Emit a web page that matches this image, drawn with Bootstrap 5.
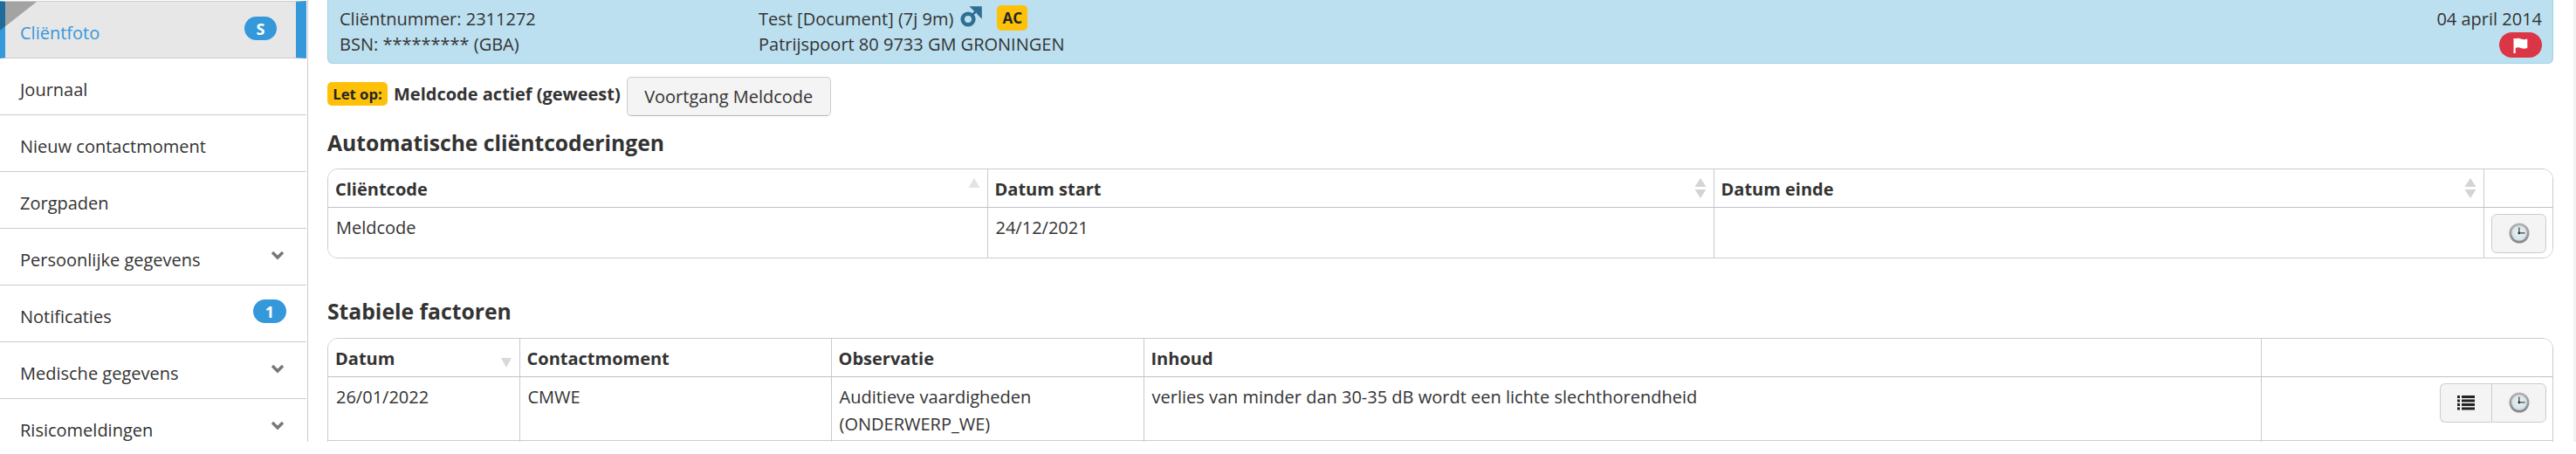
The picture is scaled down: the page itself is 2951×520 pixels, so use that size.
<!DOCTYPE html>
<html lang="nl">
<head>
<meta charset="utf-8">
<title>Cliëntfoto</title>
<link rel="stylesheet" href="https://cdn.jsdelivr.net/npm/bootstrap@5.3.0/dist/css/bootstrap.min.css">
<style>
html,body{height:520px;overflow:hidden;background:#fff}
body{font-family:"Open Sans","Noto Sans",sans-serif;font-size:20px;color:#333}
.shell{height:506px;overflow:hidden}
.side{width:353px;flex:none;border-right:1px solid #ccc;padding-top:1px}
.side-item{flex:none;height:65px;border-bottom:1px solid #ccc;padding:0 23px;color:#333;font-size:20px;background:#fff;position:relative;text-decoration:none;margin-right:1px}
.side-item .lbl{padding-top:8px}
.side-item.on{height:66px;border-top:1px solid #ccc;background:#e7e7e7;color:#3498db;border-left:6px solid #3498db;border-right:12px solid #3498db;padding-left:17px;padding-right:22px}
.fold{position:absolute;left:-6px;top:-2px}
.pill{background:#3498db;color:#fff;font-size:18px;font-weight:700;border-radius:14px;height:27px;display:flex;align-items:center;justify-content:center;line-height:1;position:absolute}
.pill-s{width:37px;right:22px;top:17px}
.pill-1{width:38px;right:23px;top:16px}
.chev{position:absolute;right:25px;top:25px}
.main{flex:1;min-width:0;padding:0 23px 0 22px}
.strip{width:3px;flex:none;background:#f1f1f1}
.banner{height:73px;background:#bce0f0;border:1px solid #9bd3e6;border-top:0;border-radius:0 0 6px 6px;padding:7px 12px 0 13px;line-height:29px;font-size:20px}
.bcol{width:480px}
.mars{margin:-6px 0 0 8px}
.ac{background:#ffc107;color:#212529;font-weight:700;border-radius:5px;font-size:17px;width:35px;height:29px;line-height:29px;text-align:center;margin:-2px 0 0 17px}
.flagpill{background:#dc3545;width:49px;height:29px;border-radius:15px;display:flex;align-items:center;justify-content:center;margin-top:1px}
.notice{height:60px;padding-top:15px;gap:7px}
.letop{background:#ffc107;color:#212529;font-weight:700;font-size:16.700px;border-radius:5px;height:27px;line-height:27px;width:69px;text-align:center;white-space:nowrap;margin-top:6px}
.notice b{font-weight:700;font-size:20px;line-height:27px;margin-top:6px}
.meld{height:45px;width:234px;background:#f4f4f4;border:1px solid #ccc;border-bottom-color:#b5b5b5;color:#333;font-size:20px;padding:0;border-radius:5px}
.ttl{font-size:24.700px;font-weight:700;color:#333;margin:0;line-height:28px}
.ttl-a{padding-top:17px}
.ttl-b{padding-top:47px}
.tbox{margin:15px 0 0;border:1px solid #ccc;border-radius:12px;overflow:hidden;background:#fff}
.ttl-b+.tbox{margin-top:16px}
.tb{width:100%;table-layout:fixed;margin:0;font-size:20px;color:#333}
.tb th,.tb td{border:0;border-right:1px solid #c9c9d0;padding:0 9px;vertical-align:top;position:relative;background:#fff;color:#333;box-shadow:none}
.tb th:last-child,.tb td:last-child{border-right:0}
.tb th{height:43px;border-bottom:1px solid #c0c0c8;font-size:20px;font-weight:700;vertical-align:middle;padding:3px 9px 0 8px}
.tb td{padding-top:7px;line-height:31px}
.t1 td{height:58px}
.t2 td{height:73px;border-bottom:1px solid #ccc}
.c1a{width:755px}.c1b{width:832px}.c1c{width:882px}
.c2a{width:219px}.c2b{width:357px}.c2c{width:358px}.c2d{width:1280px}
.sort{position:absolute;right:8px;top:10px}
.actions{position:absolute;top:7px;right:7px}
.tb td.act{padding:0}
.clockbtn,.listbtn{height:45px;width:63px;background:#f4f4f4;border:1px solid #ccc;border-radius:6px;padding:0;display:flex;align-items:center;justify-content:center}
.listbtn{width:59px;border-right:0;border-radius:6px 0 0 6px}
.joined{border-radius:0 6px 6px 0}
</style>
</head>
<body>
<svg width="0" height="0" class="position-absolute">
<defs>
<radialGradient id="face" cx="50%" cy="45%" r="55%"><stop offset="0" stop-color="#eef5f6"/><stop offset="1" stop-color="#cfe0e4"/></radialGradient>
<linearGradient id="rim" x1="0" y1="0" x2="0" y2="1"><stop offset="0" stop-color="#b5b5b8"/><stop offset="1" stop-color="#86868a"/></linearGradient>
<symbol id="clock" viewBox="0 0 24 24"><circle cx="12" cy="12" r="11.500" fill="url(#rim)"/><circle cx="12" cy="12" r="8.800" fill="url(#face)"/><path d="M11.200 5.500h1.300v5.700h6v1.400h-7.300z" fill="#444"/><circle cx="11.800" cy="12" r="1.400" fill="#333"/></symbol>
</defs>
</svg>
<div class="shell d-flex">
  <nav class="side d-flex flex-column">
    <a class="side-item on d-flex align-items-center" href="#">
      <svg class="fold" width="42" height="35" viewBox="0 0 42 35"><path d="M0 2h42L0 35z" fill="#a3a3a3"/><path d="M0 2h6v28L0 35z" fill="#1f6b9c"/></svg>
      <span class="lbl">Cliëntfoto</span><span class="pill pill-s">S</span>
    </a>
    <a class="side-item d-flex align-items-center" href="#"><span class="lbl">Journaal</span></a>
    <a class="side-item d-flex align-items-center" href="#"><span class="lbl">Nieuw contactmoment</span></a>
    <a class="side-item d-flex align-items-center" href="#"><span class="lbl">Zorgpaden</span></a>
    <a class="side-item d-flex align-items-center" href="#"><span class="lbl">Persoonlijke gegevens</span><svg class="chev" width="16" height="12" viewBox="0 0 16 12"><path d="M2 2l6 6 6-6" fill="none" stroke="#777" stroke-width="3.400"/></svg></a>
    <a class="side-item d-flex align-items-center" href="#"><span class="lbl">Notificaties</span><span class="pill pill-1">1</span></a>
    <a class="side-item d-flex align-items-center" href="#"><span class="lbl">Medische gegevens</span><svg class="chev" width="16" height="12" viewBox="0 0 16 12"><path d="M2 2l6 6 6-6" fill="none" stroke="#777" stroke-width="3.400"/></svg></a>
    <a class="side-item d-flex align-items-center" href="#"><span class="lbl">Risicomeldingen</span><svg class="chev" width="16" height="12" viewBox="0 0 16 12"><path d="M2 2l6 6 6-6" fill="none" stroke="#777" stroke-width="3.400"/></svg></a>
  </nav>
  <main class="main">
    <div class="banner d-flex">
      <div class="bcol">Cliëntnummer: 2311272<br>BSN: ********* (GBA)</div>
      <div class="flex-grow-1">
        <div class="d-flex align-items-center">Test [Document] (7j 9m)<svg class="mars" width="25" height="24" viewBox="0 0 25 24"><circle cx="9" cy="15" r="6.300" fill="none" stroke="#2f6f92" stroke-width="4.600"/><path d="M13 11l7-7M13.500 1.500h10v10l-3.500-3.500V5h-3z" fill="#2f6f92" stroke="#2f6f92" stroke-width="2.600"/></svg><span class="ac">AC</span></div>
        <div>Patrijspoort 80 9733 GM GRONINGEN</div>
      </div>
      <div class="text-end d-flex flex-column align-items-end">04 april 2014
        <span class="flagpill"><svg width="19" height="18" viewBox="0 0 19 18"><path d="M1.500 1v17h2.200v-6c2-1.200 4-.9 6 0 2.500 1 5 .9 7.600-.1V1.500c-2.600 1-5 1-7.300 0-2.500-1-4.800-1-6.500-.1V1z" fill="#fff"/></svg></span>
      </div>
    </div>
    <div class="notice d-flex align-items-start">
      <span class="letop">Let op:</span><b>Meldcode actief (geweest)</b>
      <button class="btn meld" type="button">Voortgang Meldcode</button>
    </div>
    <h2 class="ttl ttl-a">Automatische cliëntcoderingen</h2>
    <div class="tbox">
      <table class="table tb t1">
        <colgroup><col class="c1a"><col class="c1b"><col class="c1c"><col></colgroup>
        <thead><tr>
          <th>Cliëntcode<svg class="sort" width="14" height="22" viewBox="0 0 14 22"><path d="M7 0l6.500 11H.5z" fill="#e3e3e3"/></svg></th>
          <th>Datum start<svg class="sort" width="14" height="23" viewBox="0 0 14 23"><path d="M7 0l6.500 10H.5zM7 23l6.500-10H.5z" fill="#d4d4d4"/></svg></th>
          <th>Datum einde<svg class="sort" width="14" height="23" viewBox="0 0 14 23"><path d="M7 0l6.500 10H.5zM7 23l6.500-10H.5z" fill="#d4d4d4"/></svg></th>
          <th></th>
        </tr></thead>
        <tbody><tr>
          <td>Meldcode</td><td>24/12/2021</td><td></td>
          <td class="act"><div class="actions"><button class="btn clockbtn" type="button" aria-label="Historie"><svg width="24" height="24"><use href="#clock"/></svg></button></div></td>
        </tr></tbody>
      </table>
    </div>
    <h2 class="ttl ttl-b">Stabiele factoren</h2>
    <div class="tbox">
      <table class="table tb t2">
        <colgroup><col class="c2a"><col class="c2b"><col class="c2c"><col class="c2d"><col></colgroup>
        <thead><tr>
          <th>Datum<svg class="sort" width="14" height="23" viewBox="0 0 14 23"><path d="M1 12h12l-6 11z" fill="#d9d9d9"/></svg></th>
          <th>Contactmoment</th><th>Observatie</th><th>Inhoud</th><th></th>
        </tr></thead>
        <tbody><tr>
          <td>26/01/2022</td><td>CMWE</td><td>Auditieve vaardigheden (ONDERWERP_WE)</td>
          <td>verlies van minder dan 30-35 dB wordt een lichte slechthorendheid</td>
          <td class="act"><div class="actions d-flex">
            <button class="btn listbtn" type="button" aria-label="Lijst"><svg width="20" height="18" viewBox="0 0 20 18"><path d="M0 1h3v3H0zM5 1h15v3H5zM0 5.500h3v3H0zM5 5.500h15v3H5zM0 10h3v3H0zM5 10h15v3H5zM0 14.500h3v3H0zM5 14.500h15v3H5z" fill="#222"/></svg></button>
            <button class="btn clockbtn joined" type="button" aria-label="Historie"><svg width="24" height="24"><use href="#clock"/></svg></button>
          </div></td>
        </tr><tr><td></td><td></td><td></td><td></td><td></td></tr></tbody>
      </table>
    </div>
  </main>
  <div class="strip"></div>
</div>
</body>
</html>
